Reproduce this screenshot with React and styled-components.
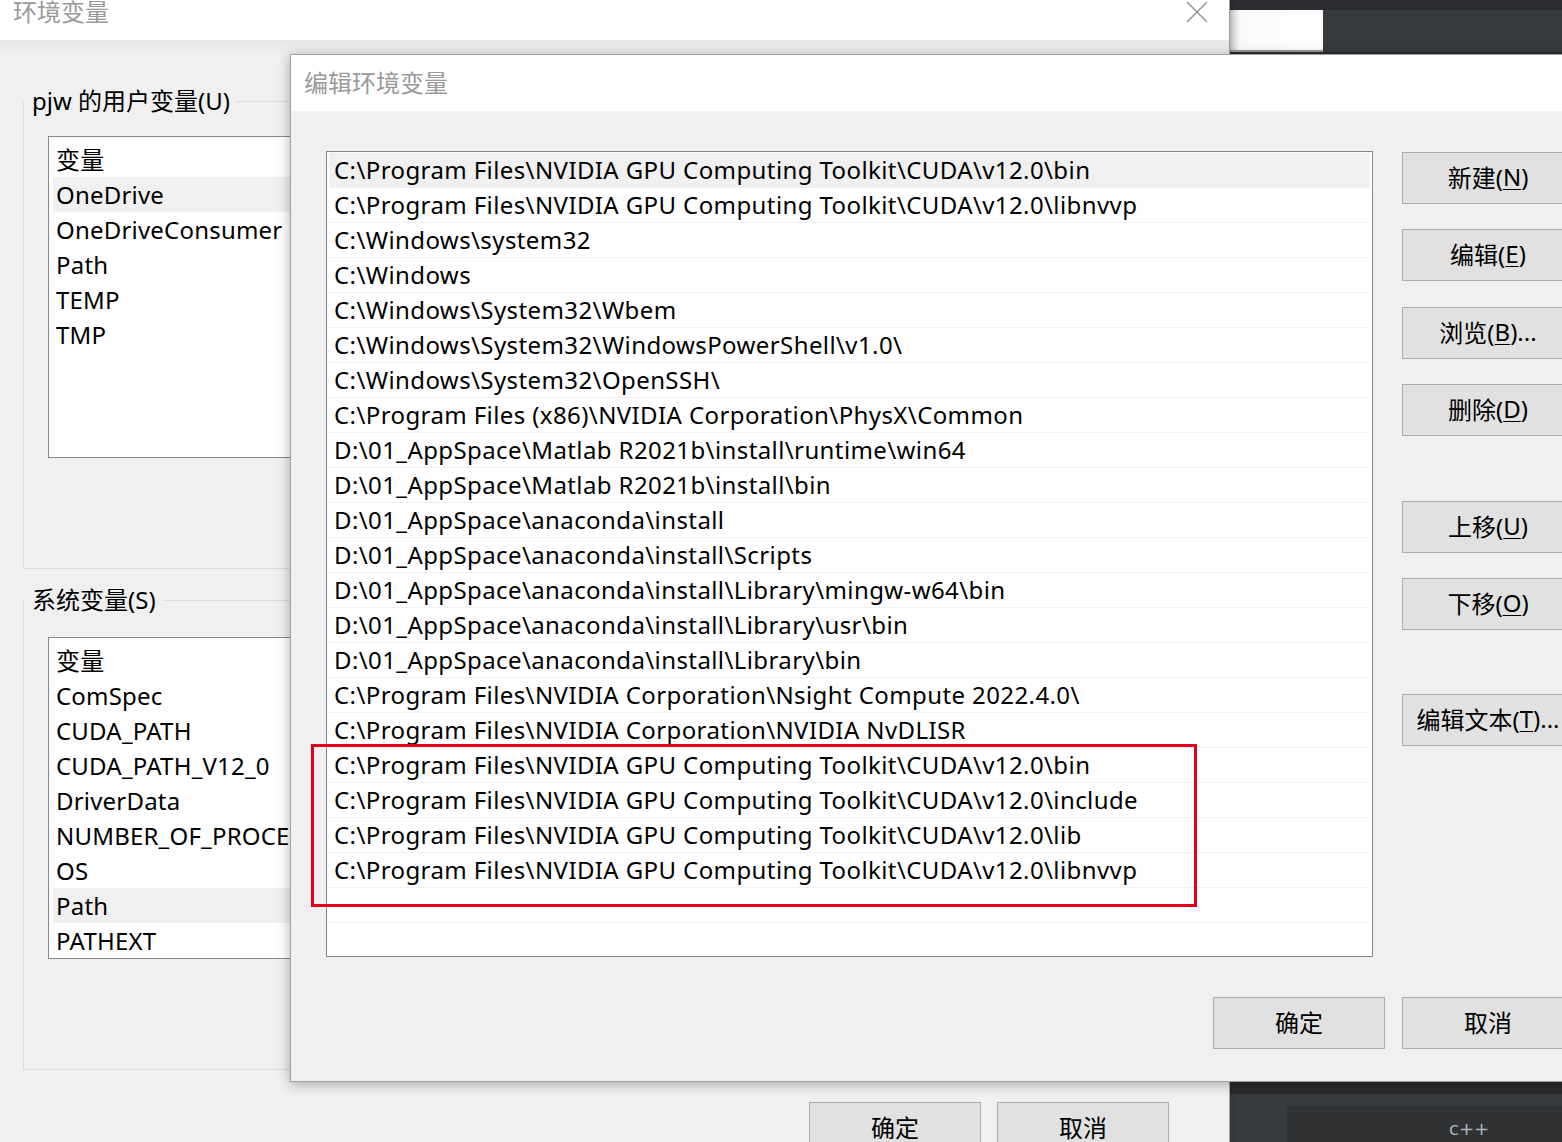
import styled, { createGlobalStyle } from "styled-components";

const GlobalStyle = createGlobalStyle`
	html, body {
		margin: 0;
		padding: 0;
		overflow: hidden;
		background: #f0f0f0;
	}

	* {
		box-sizing: border-box;
	}
`;

const FONT = `"Noto Sans", "Noto Sans CJK SC", sans-serif`;

const Desktop = styled.div`
	position: relative;
	width: 1562px;
	height: 1142px;
	overflow: hidden;
	background: #f0f0f0;
	font-family: ${FONT};
	font-size: 24px;
	color: #000;
`;

/* dark IDE window behind the dialogs */
const Ide = styled.div`
	position: absolute;
	left: 1230px;
	top: 0;
	width: 332px;
	height: 1142px;
	background: #373b3f;
	display: flex;
	flex-direction: column;
`;

const IdeTop = styled.div`
	height: 10px;
	background: #2b2d30;
`;

const IdeTabs = styled.div`
	height: 44px;
	display: flex;
	border-bottom: 2px solid #2b2d30;
`;

const IdeTab = styled.div`
	width: 93px;
	background: linear-gradient(to right, #c8c8c8 0px, #fafafa 10px, #fff 100%);
	border-bottom: 2px solid #9a9a9a;
`;

const IdeSpacer = styled.div`
	flex: 1;
`;

const IdeBottom = styled.div`
	height: 61px;
	display: flex;
	flex-direction: column;
	background: #373b3f;
`;

const IdeStrip = styled.div`
	height: 13px;
	background: #2b2b2b;
	border-top: 1px solid #222;
`;

const IdePanel = styled.div`
	margin: 12px 0 0 57px;
	flex: 1;
	background: #313233;
	border-radius: 3px 0 0 0;
	color: #a9b4c2;
	font-family: "DejaVu Sans", sans-serif;
	font-size: 18px;
	padding: 12px 0 0 162px;
`;

/* windows */
const Window = styled.div`
	position: absolute;
	left: ${(p) => p.$left}px;
	top: ${(p) => p.$top}px;
	width: ${(p) => p.$width}px;
	height: ${(p) => p.$height}px;
	background: #f0f0f0;
	border: 1px solid #a0a0a0;
	box-shadow: ${(p) => (p.$active ? "0 2px 12px rgba(0,0,0,0.32)" : "0 0 6px rgba(0,0,0,0.18)")};
	display: flex;
	flex-direction: column;
`;

const TitleBar = styled.div`
	height: 56px;
	flex-shrink: 0;
	background: #fff;
	display: flex;
	align-items: center;
	justify-content: space-between;
	padding: 0 20px 0 ${(p) => p.$pad}px;
`;

const TitleText = styled.div`
	color: #9a9a9a;
	font-size: 24px;
	line-height: 32px;
`;

const CloseIcon = () => (
	<svg width="24" height="24" viewBox="0 0 24 24">
		<path d="M2 2 L22 22 M22 2 L2 22" stroke="#9a9a9a" strokeWidth="1.6" fill="none" />
	</svg>
);

const EnvBody = styled.div`
	flex: 1;
	padding: 45px 23px 0 23px;
	background: linear-gradient(to bottom, #e6e6e6 0px, #f0f0f0 14px);
	display: flex;
	flex-direction: column;
`;

const GroupBox = styled.fieldset`
	margin: ${(p) => p.$mt}px 0 0 0;
	padding: 0 24px;
	border: 1px solid #dcdcdc;
	min-width: 0;

	legend {
		margin-left: -24px;
		padding: 0 6px 0 8px;
		font-size: 24px;
		line-height: 32px;
		color: #000;
	}
`;

const VarList = styled.div`
	margin: ${(p) => p.$mt}px 0 110px 0;
	height: 322px;
	background: #fff;
	border: 1px solid #828790;
	padding-top: 5px;
	overflow: hidden;
`;

const VarRow = styled.div`
	height: 35px;
	line-height: 35px;
	margin: 0 4px;
	padding-left: 3px;
	white-space: nowrap;
	letter-spacing: 0.2px;
	background: ${(p) => (p.$selected ? "#f0f0f0" : "transparent")};
`;

const FooterRow = styled.div`
	display: flex;
	justify-content: flex-end;
	gap: ${(p) => p.$gap}px;
	margin: ${(p) => p.$mt}px ${(p) => p.$mr}px 0 0;
`;

const Button = styled.div`
	width: 172px;
	height: 52px;
	flex-shrink: 0;
	margin-top: ${(p) => p.$mt || 0}px;
	background: #e1e1e1;
	border: 1px solid #adadad;
	display: flex;
	align-items: center;
	justify-content: center;
	padding-bottom: 3px;
	font-size: 24px;
	color: #000;
	white-space: nowrap;

	u {
		text-decoration-thickness: 1px;
		text-underline-offset: 3px;
	}
`;

/* edit dialog */
const DialogBody = styled.div`
	flex: 1;
	padding: 40px 35px 0 35px;
	display: flex;
	flex-direction: column;
`;

const DialogMain = styled.div`
	display: flex;
	gap: 29px;
`;

const PathList = styled.div`
	width: 1047px;
	height: 806px;
	background: #fff;
	border: 1px solid #828790;
	padding-top: 1px;
	overflow: hidden;
`;

const PathRow = styled.div`
	height: 35px;
	line-height: 34px;
	margin: 0 2px;
	padding-left: 5px;
	border-bottom: 1px solid #f0f0f0;
	white-space: nowrap;
	letter-spacing: 0.4px;
	background: ${(p) => (p.$selected ? "#f0f0f0" : "#fff")};
`;

const ButtonColumn = styled.div`
	display: flex;
	flex-direction: column;
	padding-top: 1px;
`;

const Highlight = styled.div`
	position: absolute;
	left: 311px;
	top: 744px;
	width: 886px;
	height: 163px;
	border: 3px solid #e3001b;
	pointer-events: none;
`;

const userVars = ["OneDrive", "OneDriveConsumer", "Path", "TEMP", "TMP"];
const sysVars = [
	"ComSpec",
	"CUDA_PATH",
	"CUDA_PATH_V12_0",
	"DriverData",
	"NUMBER_OF_PROCESSORS",
	"OS",
	"Path",
	"PATHEXT",
];

const paths = [
	"C:\\Program Files\\NVIDIA GPU Computing Toolkit\\CUDA\\v12.0\\bin",
	"C:\\Program Files\\NVIDIA GPU Computing Toolkit\\CUDA\\v12.0\\libnvvp",
	"C:\\Windows\\system32",
	"C:\\Windows",
	"C:\\Windows\\System32\\Wbem",
	"C:\\Windows\\System32\\WindowsPowerShell\\v1.0\\",
	"C:\\Windows\\System32\\OpenSSH\\",
	"C:\\Program Files (x86)\\NVIDIA Corporation\\PhysX\\Common",
	"D:\\01_AppSpace\\Matlab R2021b\\install\\runtime\\win64",
	"D:\\01_AppSpace\\Matlab R2021b\\install\\bin",
	"D:\\01_AppSpace\\anaconda\\install",
	"D:\\01_AppSpace\\anaconda\\install\\Scripts",
	"D:\\01_AppSpace\\anaconda\\install\\Library\\mingw-w64\\bin",
	"D:\\01_AppSpace\\anaconda\\install\\Library\\usr\\bin",
	"D:\\01_AppSpace\\anaconda\\install\\Library\\bin",
	"C:\\Program Files\\NVIDIA Corporation\\Nsight Compute 2022.4.0\\",
	"C:\\Program Files\\NVIDIA Corporation\\NVIDIA NvDLISR",
	"C:\\Program Files\\NVIDIA GPU Computing Toolkit\\CUDA\\v12.0\\bin",
	"C:\\Program Files\\NVIDIA GPU Computing Toolkit\\CUDA\\v12.0\\include",
	"C:\\Program Files\\NVIDIA GPU Computing Toolkit\\CUDA\\v12.0\\lib",
	"C:\\Program Files\\NVIDIA GPU Computing Toolkit\\CUDA\\v12.0\\libnvvp",
	"",
	"",
];

const sideButtons = [
	{ label: "新建", key: "N", mt: 0 },
	{ label: "编辑", key: "E", mt: 25 },
	{ label: "浏览", key: "B", tail: "...", mt: 26 },
	{ label: "删除", key: "D", mt: 25 },
	{ label: "上移", key: "U", mt: 65 },
	{ label: "下移", key: "O", mt: 25 },
	{ label: "编辑文本", key: "T", tail: "...", mt: 64 },
];

const App = () => {
	return (
		<Desktop>
			<GlobalStyle />
			<Ide>
				<IdeTop />
				<IdeTabs>
					<IdeTab />
				</IdeTabs>
				<IdeSpacer />
				<IdeBottom>
					<IdeStrip />
					<IdePanel>c++</IdePanel>
				</IdeBottom>
			</Ide>

			<Window $left={-1} $top={-17} $width={1231} $height={1200}>
				<TitleBar $pad={13}>
					<TitleText>环境变量</TitleText>
					<CloseIcon />
				</TitleBar>
				<EnvBody>
					<GroupBox $mt={0}>
						<legend>pjw 的用户变量(U)</legend>
						<VarList $mt={19}>
							<VarRow>变量</VarRow>
							{userVars.map((v, i) => (
								<VarRow key={v} $selected={i === 0}>
									{v}
								</VarRow>
							))}
						</VarList>
					</GroupBox>
					<GroupBox $mt={15}>
						<legend>系统变量(S)</legend>
						<VarList $mt={21}>
							<VarRow>变量</VarRow>
							{sysVars.map((v) => (
								<VarRow key={v} $selected={v === "Path"}>
									{v}
								</VarRow>
							))}
						</VarList>
					</GroupBox>
					<FooterRow $gap={16} $mt={32} $mr={37}>
						<Button>确定</Button>
						<Button>取消</Button>
					</FooterRow>
				</EnvBody>
			</Window>

			<Window $left={290} $top={54} $width={1320} $height={1028} $active>
				<TitleBar $pad={13}>
					<TitleText>编辑环境变量</TitleText>
				</TitleBar>
				<DialogBody>
					<DialogMain>
						<PathList>
							{paths.map((p, i) => (
								<PathRow key={i} $selected={i === 0}>
									{p}
								</PathRow>
							))}
						</PathList>
						<ButtonColumn>
							{sideButtons.map((b) => (
								<Button key={b.key} $mt={b.mt}>
									{b.label}(<u>{b.key}</u>){b.tail}
								</Button>
							))}
						</ButtonColumn>
					</DialogMain>
					<FooterRow $gap={17} $mt={40} $mr={0}>
						<Button>确定</Button>
						<Button>取消</Button>
					</FooterRow>
				</DialogBody>
			</Window>

			<Highlight />
		</Desktop>
	);
};

export default App;
